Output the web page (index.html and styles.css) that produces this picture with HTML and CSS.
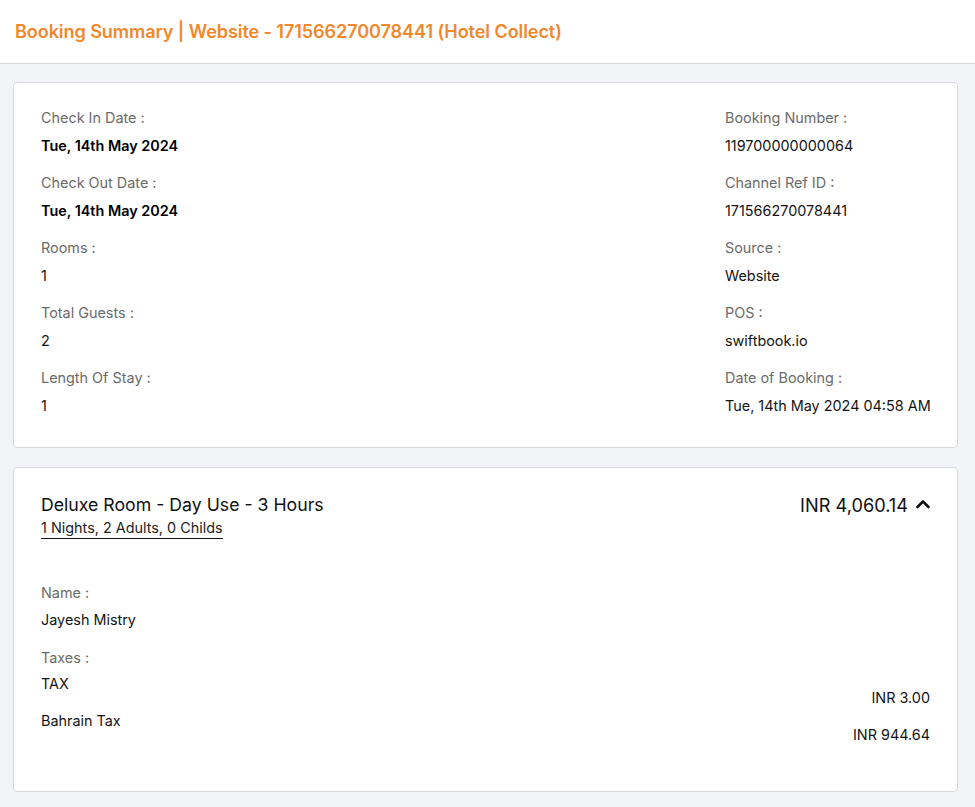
FILE: index.html
```html
<!DOCTYPE html>
<html>
<head>
<meta charset="utf-8">
<link rel="stylesheet" href="styles.css">
</head>
<body>
<header class="topbar">
  <h1 class="title">Booking Summary | Website - 171566270078441 (Hotel Collect)</h1>
</header>
<main class="content">
  <section class="card info-card">
    <div class="col">
      <div class="field"><div class="label">Check In Date :</div><div class="value bold">Tue, 14th May 2024</div></div>
      <div class="field"><div class="label">Check Out Date :</div><div class="value bold">Tue, 14th May 2024</div></div>
      <div class="field"><div class="label">Rooms :</div><div class="value">1</div></div>
      <div class="field"><div class="label">Total Guests :</div><div class="value">2</div></div>
      <div class="field"><div class="label">Length Of Stay :</div><div class="value">1</div></div>
    </div>
    <div class="col">
      <div class="field"><div class="label">Booking Number :</div><div class="value">119700000000064</div></div>
      <div class="field"><div class="label">Channel Ref ID :</div><div class="value">171566270078441</div></div>
      <div class="field"><div class="label">Source :</div><div class="value">Website</div></div>
      <div class="field"><div class="label">POS :</div><div class="value">swiftbook.io</div></div>
      <div class="field"><div class="label">Date of Booking :</div><div class="value">Tue, 14th May 2024 04:58 AM</div></div>
    </div>
  </section>
  <section class="card room-card">
    <div class="room-head">
      <div>
        <div class="room-name">Deluxe Room - Day Use - 3 Hours</div>
        <div class="room-sub">1 Nights, 2 Adults, 0 Childs</div>
      </div>
      <div class="room-price">INR 4,060.14
        <svg class="chev" width="14" height="10" viewBox="0 0 14 10"><path d="M1.5 8 L7 2.5 L12.5 8" fill="none" stroke="#111" stroke-width="2.6" stroke-linecap="round" stroke-linejoin="round"/></svg>
      </div>
    </div>
    <div class="guest">
      <div class="label">Name :</div>
      <div class="value">Jayesh Mistry</div>
    </div>
    <div class="taxes">
      <div class="label">Taxes :</div>
      <div class="tax-row"><div class="tax-name">TAX</div><div class="tax-amt">INR 3.00</div></div>
      <div class="tax-row"><div class="tax-name">Bahrain Tax</div><div class="tax-amt">INR 944.64</div></div>
    </div>
  </section>
</main>
</body>
</html>
```
FILE: styles.css
```css
* { box-sizing: border-box; }
html, body { margin: 0; padding: 0; }
body {
  background: #f3f4f7;
  font-family: Inter, "Noto Sans", sans-serif;
  color: #141414;
  width: 975px;
  height: 807px;
  overflow: hidden;
}
.topbar {
  background: #fff;
  height: 64px;
  border-bottom: 1px solid #d9dadd;
  display: flex;
  align-items: center;
  padding: 0 15px 2px;
}
.title {
  margin: 0;
  font-size: 18.1px;
  font-weight: 600;
  color: #f2882b;
  letter-spacing: -0.1px;
}
.content {
  padding: 18px 17px 0 13px;
  display: flex;
  flex-direction: column;
  gap: 19px;
}
.card {
  background: #fff;
  border: 1px solid #d8d9dc;
  border-radius: 4px;
}
.info-card {
  display: grid;
  grid-template-columns: 1fr 205px;
  padding: 25px 27px 31px 27px;
}
.col { display: flex; flex-direction: column; gap: 17px; }
.field { display: flex; flex-direction: column; gap: 8px; }
.label {
  font-size: 14.4px;
  line-height: 20px;
  color: #6b6b6b;
  white-space: nowrap;
}
.value {
  font-size: 14.4px;
  line-height: 20px;
  color: #141414;
  white-space: nowrap;
}
.value.bold { font-weight: 600; color: #000; }
.room-card {
  padding: 25px 27px 43px 27px;
}
.room-head {
  display: flex;
  justify-content: space-between;
  align-items: flex-start;
}
.room-name {
  font-size: 17.7px;
  line-height: 24px;
  color: #111;
}
.room-sub {
  display: inline-block;
  font-size: 14.4px;
  line-height: 17px;
  color: #222;
  border-bottom: 1.5px solid #111;
  padding-bottom: 2px;
}
.room-price {
  font-size: 18.2px;
  line-height: 24px;
  color: #111;
  display: flex;
  align-items: center;
  gap: 8px;
}
.chev { margin-top: -3px; }
.guest {
  margin-top: 44px;
  display: flex;
  flex-direction: column;
  gap: 7px;
}
.taxes {
  margin-top: 18px;
  display: flex;
  flex-direction: column;
}
.tax-row {
  display: flex;
  justify-content: space-between;
  margin-top: 6px;
  height: 37px;
}
.tax-row + .tax-row { margin-top: 0; }
.tax-name, .tax-amt {
  font-size: 14.4px;
  line-height: 20px;
  color: #141414;
}
.tax-amt { padding-top: 14px; }
```
